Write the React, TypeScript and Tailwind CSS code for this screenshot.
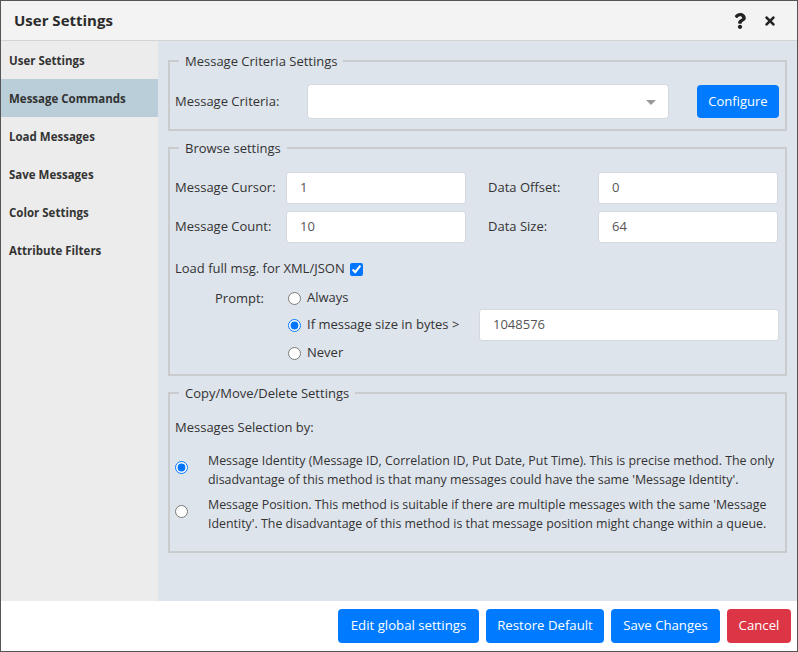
import React from "react";
import { FaQuestion, FaTimes } from "react-icons/fa";

const font = { fontFamily: '"Open Sans", "Noto Sans", Arial, sans-serif' };

const navItems = [
  "User Settings",
  "Message Commands",
  "Load Messages",
  "Save Messages",
  "Color Settings",
  "Attribute Filters",
];

function Field({ value }: { value: string }) {
  return (
    <div className="flex h-[32px] items-center rounded-[3px] border border-[#d5d9de] bg-white pl-[13px] text-[13px] text-[#555]">
      {value}
    </div>
  );
}

function Section({
  title,
  className,
  children,
}: {
  title: string;
  className?: string;
  children: React.ReactNode;
}) {
  return (
    <fieldset
      className={`border-2 border-[#c9cbcd] pl-[5px] pr-[6px] ${className ?? ""}`}
    >
      <legend className="ml-[4px] px-[6px] text-[13px] leading-[20px] text-[#333]">
        {title}
      </legend>
      {children}
    </fieldset>
  );
}

function Radio({ checked }: { checked?: boolean }) {
  return (
    <input
      type="radio"
      checked={!!checked}
      readOnly
      className="m-0 h-[13px] w-[13px] shrink-0 accent-[#0075ff]"
    />
  );
}

export default function App() {
  return (
    <div
      className="flex h-[652px] w-[798px] flex-col border border-[#555] bg-white text-[#333]"
      style={font}
    >
      <div className="flex h-[40px] items-center justify-between border-b border-[#d4d4d4] bg-[#f3f3f3] pl-[13px] pr-[20px]">
        <h1 className="text-[15px] font-bold text-[#2b2b2b]">User Settings</h1>
        <div className="flex items-center gap-[15px] text-[#222]">
          <FaQuestion className="h-[16px] w-[16px]" />
          <FaTimes className="h-[14px] w-[14px]" />
        </div>
      </div>

      <div className="flex h-[560px]">
        <aside className="w-[157px] bg-[#ececec]">
          {navItems.map((item) => (
            <div
              key={item}
              className={`flex h-[38px] items-center pl-[8px] pt-[2px] text-[11.5px] font-bold text-[#333] ${
                item === "Message Commands" ? "bg-[#b9ced8]" : ""
              }`}
            >
              {item}
            </div>
          ))}
        </aside>

        <main className="flex-1 bg-[#dee4ec] pl-[10px] pr-[10px] pt-[10px]">
          <Section title="Message Criteria Settings" className="pb-[10px]">
            <div className="mt-[13px] flex items-center text-[13px]">
              <span className="w-[132px]">Message Criteria:</span>
              <div className="relative h-[35px] w-[362px] rounded-[4px] border border-[#d5d9de] bg-white">
                <span className="absolute right-[12px] top-[15px] h-0 w-0 border-x-[5px] border-t-[5px] border-x-transparent border-t-[#999]" />
              </div>
              <button className="ml-auto h-[33px] w-[82px] rounded-[4px] bg-[#007bff] text-[13px] text-white">
                Configure
              </button>
            </div>
          </Section>

          <Section title="Browse settings" className="mt-[7px] pb-[11px]">
            <div className="mt-[14px] grid grid-cols-[111px_180px_22px_110px_180px] items-center gap-y-[7px] text-[13px]">
              <span>Message Cursor:</span>
              <Field value="1" />
              <span />
              <span>Data Offset:</span>
              <Field value="0" />
              <span>Message Count:</span>
              <Field value="10" />
              <span />
              <span>Data Size:</span>
              <Field value="64" />
            </div>
            <div className="mt-[16px] flex h-[20px] items-center gap-[5px] text-[13px]">
              Load full msg. for XML/JSON
              <input
                type="checkbox"
                checked
                readOnly
                className="m-0 h-[13px] w-[13px] accent-[#0075ff]"
              />
            </div>
            <div className="mt-[9px] flex text-[13px]">
              <span className="w-[113px] pl-[40px] leading-[20px]">Prompt:</span>
              <div className="flex flex-1 flex-col">
                <label className="flex h-[20px] items-center gap-[6px]">
                  <Radio /> Always
                </label>
                <div className="mt-[1px] flex h-[32px] items-center">
                  <label className="flex w-[191px] items-center gap-[6px]">
                    <Radio checked /> If message size in bytes &gt;
                  </label>
                  <div className="flex-1">
                    <Field value="1048576" />
                  </div>
                </div>
                <label className="mt-[2px] flex h-[20px] items-center gap-[6px]">
                  <Radio /> Never
                </label>
              </div>
            </div>
          </Section>

          <Section title="Copy/Move/Delete Settings" className="mt-[7px] pb-[18px]">
            <div className="mt-[14px] text-[13px] leading-[20px]">
              Messages Selection by:
            </div>
            <div className="mt-[15px] flex items-center text-[12.4px] leading-[18.5px]">
              <div className="w-[33px] shrink-0">
                <Radio checked />
              </div>
              <p>
                Message Identity (Message ID, Correlation ID, Put Date, Put Time). This is
                precise method. The only disadvantage of this method is that many messages
                could have the same 'Message Identity'.
              </p>
            </div>
            <div className="mt-[7px] flex items-center text-[12.4px] leading-[18.5px]">
              <div className="w-[33px] shrink-0">
                <Radio />
              </div>
              <p>
                Message Position. This method is suitable if there are multiple messages
                with the same 'Message Identity'. The disadvantage of this method is that
                message position might change within a queue.
              </p>
            </div>
          </Section>
        </main>
      </div>

      <div className="flex flex-1 items-center justify-end gap-[7px] pb-[1px] pr-[6px]">
        <button className="h-[34px] w-[141px] rounded-[4px] bg-[#007bff] text-[13.2px] text-white">
          Edit global settings
        </button>
        <button className="h-[34px] w-[118px] rounded-[4px] bg-[#007bff] text-[13.2px] text-white">
          Restore Default
        </button>
        <button className="h-[34px] w-[109px] rounded-[4px] bg-[#007bff] text-[13.2px] text-white">
          Save Changes
        </button>
        <button className="h-[34px] w-[64px] rounded-[4px] bg-[#dc3545] text-[13.2px] text-white">
          Cancel
        </button>
      </div>
    </div>
  );
}
